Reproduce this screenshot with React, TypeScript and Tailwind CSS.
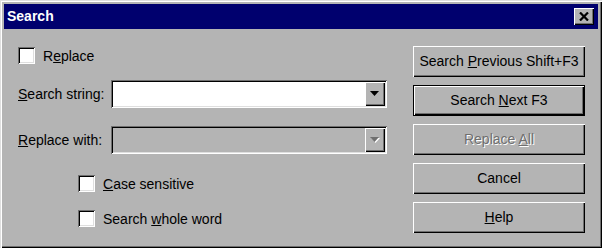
import React from 'react';

const raised =
  'shadow-[inset_1px_1px_0_#ffffff,inset_-1px_-1px_0_#000000,inset_-2px_-2px_0_#6f6f6f]';
const sunken =
  'shadow-[inset_1px_1px_0_#6f6f6f,inset_-1px_-1px_0_#ffffff,inset_2px_2px_0_#000000,inset_-2px_-2px_0_#dfdfdf]';

const Checkbox: React.FC<{ children: React.ReactNode }> = ({ children }) => (
  <div className="flex items-center gap-[8px]">
    <div className={`w-[17px] h-[17px] bg-white ${sunken}`} />
    <span className="leading-none">{children}</span>
  </div>
);

const Combo: React.FC<{ disabled?: boolean }> = ({ disabled }) => (
  <div
    className={`flex justify-end w-[276px] h-[28px] p-[2px] ${disabled ? 'bg-[#b4b4b4]' : 'bg-white'} ${sunken}`}
  >
    <div className={`flex items-center justify-center w-[20px] h-full bg-[#b4b4b4] ${raised}`}>
      <svg width="10" height="6" viewBox="0 0 10 6">
        {disabled && <polygon points="1,1 10,1 5.5,6" fill="#ffffff" />}
        <polygon points="0,0 9,0 4.5,5" fill={disabled ? '#6f6f6f' : '#000000'} />
      </svg>
    </div>
  </div>
);

const Button: React.FC<{ children: React.ReactNode; isDefault?: boolean; disabled?: boolean }> = ({
  children,
  isDefault,
  disabled,
}) => {
  const inner = (
    <div
      className={`flex items-center justify-center w-full h-full bg-[#b4b4b4] ${raised} ${
        disabled ? 'text-[#6f6f6f] [text-shadow:1px_1px_0_#ffffff]' : 'text-black'
      }`}
    >
      <span>{children}</span>
    </div>
  );
  if (isDefault) {
    return <div className="w-[172px] h-[31px] border border-black">{inner}</div>;
  }
  return <div className="w-[172px] h-[31px]">{inner}</div>;
};

export default function App() {
  return (
    <div
      className="w-[602px] h-[248px] bg-[#b4b4b4] p-[4px] text-[14px] text-black shadow-[inset_1px_1px_0_#dfdfdf,inset_2px_2px_0_#ffffff,inset_-1px_-1px_0_#000000,inset_-2px_-2px_0_#6f6f6f]"
      style={{ fontFamily: '"Liberation Sans", Arial, sans-serif' }}
    >
      {/* title bar */}
      <div className="flex items-center justify-between h-[25px] bg-[#00006e] pl-[3px] pr-[4px]">
        <span className="text-white font-bold text-[14px]">Search</span>
        <div className={`flex items-center justify-center w-[20px] h-[17px] bg-[#b4b4b4] ${raised}`}>
          <svg width="10" height="9" viewBox="0 0 10 9" className="-mt-[1px] -ml-[1px]">
            <path d="M1 0.5 L9 8.5 M9 0.5 L1 8.5" stroke="#000" strokeWidth="2.2" />
          </svg>
        </div>
      </div>

      <div className="flex pl-[14px]">
        {/* left column */}
        <div className="w-[381px] flex flex-col pt-[18px]">
          <Checkbox>
            R<u>e</u>place
          </Checkbox>

          <div className="flex items-center mt-[16px]">
            <span className="w-[93px]">
              <u>S</u>earch string:
            </span>
            <Combo />
          </div>

          <div className="flex items-center mt-[18px]">
            <span className="w-[93px]">
              <u>R</u>eplace with:
            </span>
            <Combo disabled />
          </div>

          <div className="flex flex-col gap-[18px] mt-[21px] pl-[60px]">
            <Checkbox>
              <u>C</u>ase sensitive
            </Checkbox>
            <Checkbox>
              Search <u>w</u>hole word
            </Checkbox>
          </div>
        </div>

        {/* right column */}
        <div className="flex flex-col gap-[8px] ml-[14px] pt-[17px]">
          <Button>
            Search <u>P</u>revious Shift+F3
          </Button>
          <Button isDefault>
            Search <u>N</u>ext F3
          </Button>
          <Button disabled>
            Replace <u>A</u>ll
          </Button>
          <Button>Cancel</Button>
          <Button>
            <u>H</u>elp
          </Button>
        </div>
      </div>
    </div>
  );
}
